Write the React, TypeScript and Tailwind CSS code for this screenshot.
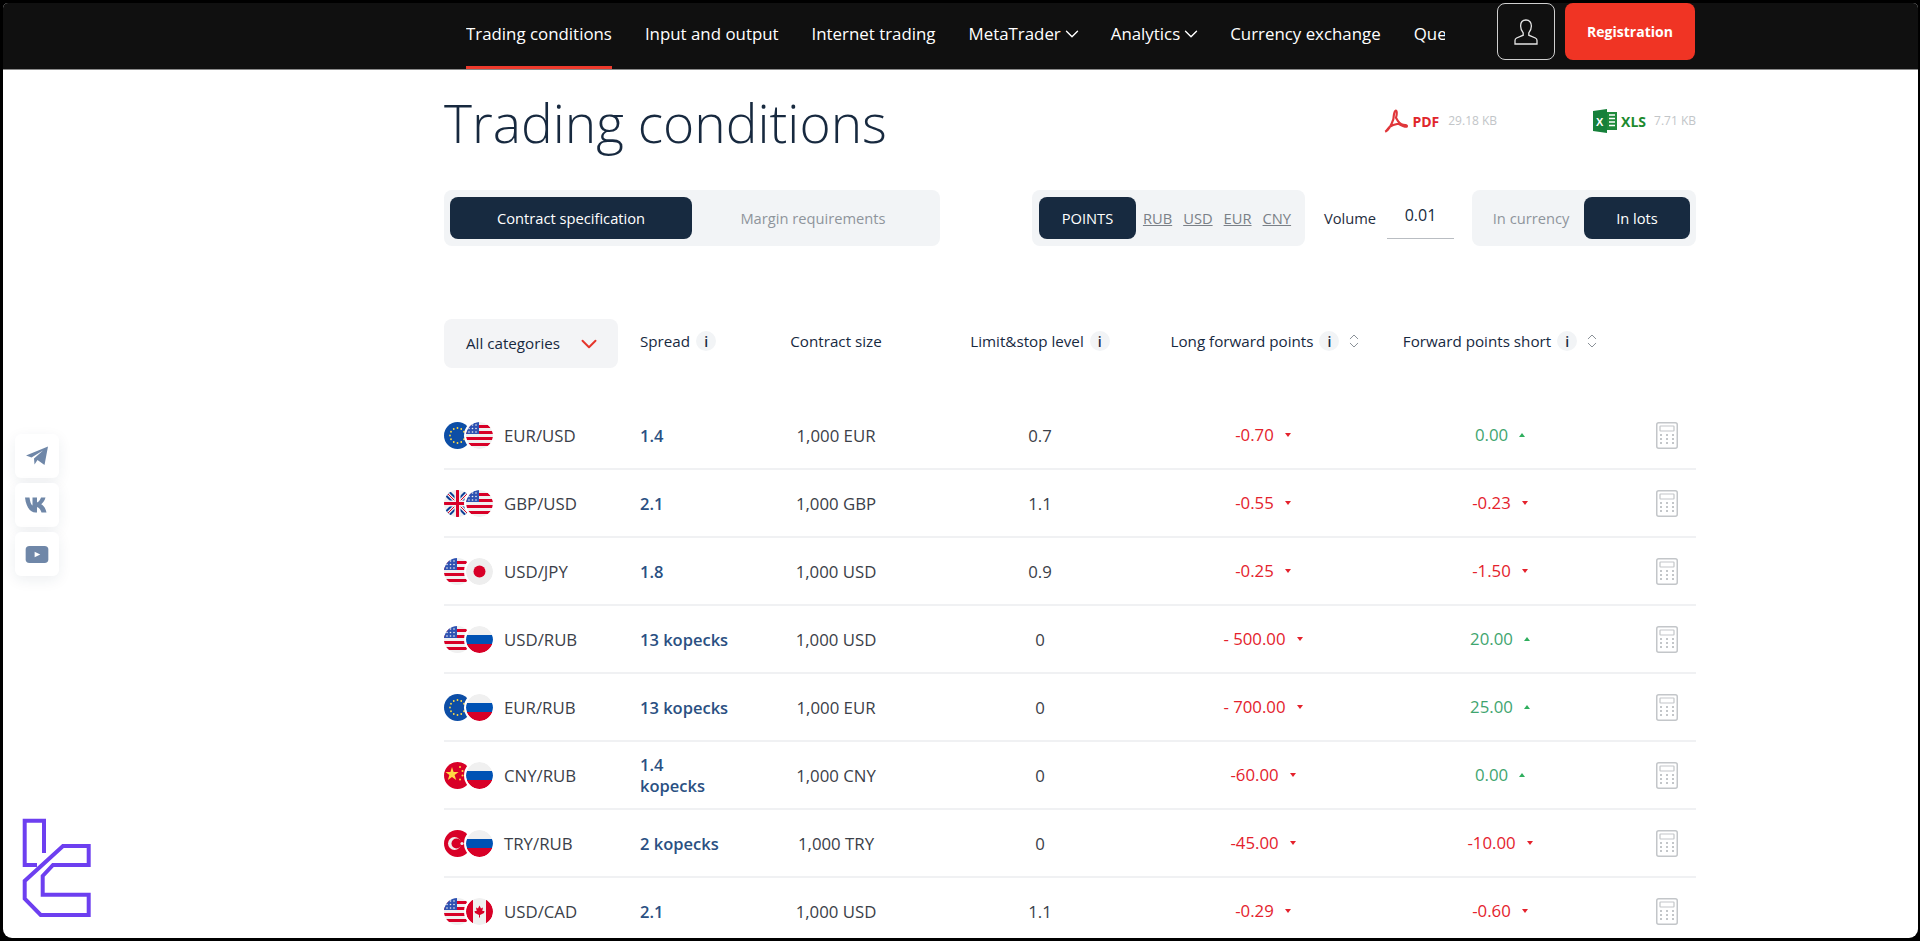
import { ChevronDown, ChevronsUpDown } from "lucide-react";
import { useId } from "react";

type Code = "EUR" | "USD" | "GBP" | "JPY" | "RUB" | "CNY" | "TRY" | "CAD";

const FONT = "font-['Open_Sans','Noto_Sans',sans-serif]";

const NAV = ["Trading conditions", "Input and output", "Internet trading"];

const ROWS: {
  a: Code;
  b: Code;
  spread: string;
  size: string;
  limit: string;
  long: string;
  short: string;
}[] = [
  { a: "EUR", b: "USD", spread: "1.4", size: "1,000 EUR", limit: "0.7", long: "-0.70", short: "0.00" },
  { a: "GBP", b: "USD", spread: "2.1", size: "1,000 GBP", limit: "1.1", long: "-0.55", short: "-0.23" },
  { a: "USD", b: "JPY", spread: "1.8", size: "1,000 USD", limit: "0.9", long: "-0.25", short: "-1.50" },
  { a: "USD", b: "RUB", spread: "13 kopecks", size: "1,000 USD", limit: "0", long: "- 500.00", short: "20.00" },
  { a: "EUR", b: "RUB", spread: "13 kopecks", size: "1,000 EUR", limit: "0", long: "- 700.00", short: "25.00" },
  { a: "CNY", b: "RUB", spread: "1.4 kopecks", size: "1,000 CNY", limit: "0", long: "-60.00", short: "0.00" },
  { a: "TRY", b: "RUB", spread: "2 kopecks", size: "1,000 TRY", limit: "0", long: "-45.00", short: "-10.00" },
  { a: "USD", b: "CAD", spread: "2.1", size: "1,000 USD", limit: "1.1", long: "-0.29", short: "-0.60" },
];

const FlagArt = ({ code }: { code: Code }) => {
  switch (code) {
    case "EUR":
      return (
        <>
          <rect width="27" height="27" fill="#0d4ea6" />
          {[0, 1, 2, 3, 4, 5, 6, 7, 8, 9, 10, 11].map((i) => (
            <circle
              key={i}
              cx={13.5 + 7.5 * Math.cos((i * Math.PI) / 6)}
              cy={13.5 + 7.5 * Math.sin((i * Math.PI) / 6)}
              r="0.9"
              fill="#ffda44"
            />
          ))}
        </>
      );
    case "USD":
      return (
        <>
          <rect width="27" height="27" fill="#f0f0f0" />
          <rect y="3" width="27" height="3" fill="#d80027" />
          <rect y="9" width="27" height="3" fill="#d80027" />
          <rect y="15" width="27" height="3" fill="#d80027" />
          <rect y="21" width="27" height="3" fill="#d80027" />
          <rect width="13" height="12" fill="#2e52b2" />
          {[3, 6.5, 10].map((x) =>
            [3, 6.5, 10].map((y) => <circle key={`${x}${y}`} cx={x} cy={y} r="0.8" fill="#f0f0f0" />)
          )}
        </>
      );
    case "GBP":
      return (
        <>
          <rect width="27" height="27" fill="#f0f0f0" />
          <path d="M0 0 L27 27 M27 0 L0 27" stroke="#0d3f96" strokeWidth="7" />
          <path d="M0 0 L27 27 M27 0 L0 27" stroke="#f0f0f0" strokeWidth="3" />
          <path d="M0 0 L27 27 M27 0 L0 27" stroke="#d80027" strokeWidth="1" />
          <path d="M13.5 0 V27 M0 13.5 H27" stroke="#f0f0f0" strokeWidth="6" />
          <path d="M13.5 0 V27 M0 13.5 H27" stroke="#d80027" strokeWidth="3" />
        </>
      );
    case "JPY":
      return (
        <>
          <rect width="27" height="27" fill="#eeeeee" />
          <circle cx="13.5" cy="13.5" r="6" fill="#d80027" />
        </>
      );
    case "RUB":
      return (
        <>
          <rect width="27" height="9" fill="#f0f0f0" />
          <rect y="9" width="27" height="9" fill="#0052b4" />
          <rect y="18" width="27" height="9" fill="#d80027" />
        </>
      );
    case "CNY":
      return (
        <>
          <rect width="27" height="27" fill="#d80027" />
          <polygon points="8,5 9.6,10 14.6,10 10.6,13 12.2,18 8,15 3.8,18 5.4,13 1.4,10 6.4,10" fill="#ffda44" />
          <circle cx="16" cy="5" r="1" fill="#ffda44" />
          <circle cx="18.5" cy="9" r="1" fill="#ffda44" />
          <circle cx="18.5" cy="13.5" r="1" fill="#ffda44" />
          <circle cx="16" cy="17.5" r="1" fill="#ffda44" />
        </>
      );
    case "TRY":
      return (
        <>
          <rect width="27" height="27" fill="#d80027" />
          <circle cx="10.5" cy="13.5" r="6.5" fill="#f0f0f0" />
          <circle cx="12.5" cy="13.5" r="5" fill="#d80027" />
          <circle cx="18" cy="13.5" r="1.6" fill="#f0f0f0" />
        </>
      );
    case "CAD":
      return (
        <>
          <rect width="27" height="27" fill="#f0f0f0" />
          <rect width="7" height="27" fill="#d80027" />
          <rect x="20" width="7" height="27" fill="#d80027" />
          <polygon
            points="13.5,7.5 15,10.5 17,9.5 16.3,13 18.5,13 18,15 14,17 14,19.5 13,19.5 13,17 9,15 8.5,13 10.7,13 10,9.5 12,10.5"
            fill="#d80027"
          />
        </>
      );
  }
};

const Flag = ({ code, front }: { code: Code; front?: boolean }) => {
  const id = useId();
  return (
    <svg
      viewBox="0 0 27 27"
      className={
        front
          ? "relative -ml-[5px] h-[27px] w-[27px] shrink-0 rounded-full bg-white ring-[2px] ring-white"
          : "h-[27px] w-[27px] shrink-0"
      }
    >
      <clipPath id={id}>
        <circle cx="13.5" cy="13.5" r="13.5" />
      </clipPath>
      <g clipPath={`url(#${id})`}>
        <FlagArt code={code} />
      </g>
    </svg>
  );
};

const InfoDot = () => (
  <span className="flex h-[20px] w-[20px] shrink-0 items-center justify-center rounded-full bg-[#f2f4f6] text-[14px] font-semibold text-[#1a2b40]">
    i
  </span>
);

const Sort = () => <ChevronsUpDown className="h-[18px] w-[18px] shrink-0 text-[#7d848c]" strokeWidth={1.2} />;

const Calculator = () => (
  <svg viewBox="0 0 22 27" className="h-[27px] w-[22px]" fill="none">
    <rect x="0.75" y="0.75" width="20.5" height="25.5" rx="2" stroke="#c3c6c9" strokeWidth="1.5" />
    <rect x="4" y="4" width="14" height="5" rx="0.5" stroke="#c3c6c9" strokeWidth="1.2" />
    {[5, 11, 17].map((x) =>
      [13, 17, 21].map((y) => <rect key={`${x}-${y}`} x={x - 1} y={y - 1} width="2" height="2" fill="#c3c6c9" />)
    )}
  </svg>
);

const Value = ({ text }: { text: string }) => {
  const down = text.startsWith("-");
  return (
    <div className={`flex items-center justify-center gap-[11px] text-[16.8px] ${down ? "text-[#e4222c]" : "text-[#3fa56f]"}`}>
      <span>{text}</span>
      <span
        className={
          down
            ? "h-0 w-0 border-x-[3.5px] border-t-[4px] border-x-transparent border-t-[#e4222c]"
            : "h-0 w-0 border-x-[3.5px] border-b-[4px] border-x-transparent border-b-[#2fae5d]"
        }
      />
    </div>
  );
};

const GRID = "grid grid-cols-[196px_96px_200px_208px_238px_236px_78px] items-center";

const App = () => {
  return (
    <div className={`relative h-[941px] overflow-hidden bg-black pb-[3px] pl-[3px] pr-[2px] pt-[3px] ${FONT}`}>
      <div className="relative h-full overflow-hidden rounded-b-[9px] rounded-t-[5px] bg-white">
        {/* Top bar */}
        <header className="flex h-[67px] border-b border-[#8a8a8a] bg-[#101010] pl-[463px]">
          <nav className="flex h-full w-[979px] gap-[33px] overflow-hidden text-[16.88px] text-white">
            {NAV.map((item, i) => (
              <a
                key={item}
                className={
                  i === 0
                    ? "flex h-full shrink-0 items-center whitespace-nowrap border-b-[3px] border-[#ee3a2c] pb-[1px]"
                    : "flex h-full shrink-0 items-center whitespace-nowrap pb-[4px]"
                }
              >
                {item}
              </a>
            ))}
            <a className="flex shrink-0 items-center whitespace-nowrap pb-[4px]">
              MetaTrader <ChevronDown className="-mr-[5px] h-[22px] w-[22px]" strokeWidth={1.5} />
            </a>
            <a className="flex shrink-0 items-center whitespace-nowrap pb-[4px]">
              Analytics <ChevronDown className="-mr-[5px] h-[22px] w-[22px]" strokeWidth={1.5} />
            </a>
            <a className="flex shrink-0 items-center whitespace-nowrap pb-[4px]">Currency exchange</a>
            <a className="flex shrink-0 items-center whitespace-nowrap pb-[4px]">Questions</a>
          </nav>
          <div className="ml-[52px] flex h-[57px] gap-[10px]">
            <button className="flex w-[58px] items-center justify-center rounded-[8px] border border-[#cfcfcf]">
              <svg viewBox="0 0 28 28" className="h-[28px] w-[28px]" fill="none" stroke="#e4e4e4" strokeWidth="1.3">
                <path d="M14 2c-3.6 0-5.4 2.6-5.4 6 0 3 1.4 5.4 2.6 6.8v2.4L4.6 20c-1.2.6-1.6 1.4-1.6 2.6V26h22v-3.4c0-1.2-.4-2-1.6-2.6l-6.6-2.8v-2.4c1.2-1.4 2.600-3.800 2.600-6.800 0-3.400-1.800-6-5.400-6z" />
              </svg>
            </button>
            <button className="w-[130px] rounded-[8px] bg-[#f03424] text-[14px] font-bold text-white">
              Registration
            </button>
          </div>
        </header>

        <main className="ml-[441px] w-[1252px]">
          {/* Title row */}
          <div className="flex h-[120px] items-start">
            <h1 className="mt-[18px] text-[53.3px] font-light leading-[70px] text-[#17293f]">Trading conditions</h1>
            <div className="ml-auto mt-[38px] flex items-center">
              <svg viewBox="0 0 24 24" className="h-[26px] w-[26px]" fill="none" stroke="#e0363a" strokeWidth="2">
                <path d="M2 22c3-1.500 6-7 7.500-11.500C10 8 10 3 11.500 2.500 13 2 13 6 12 9c2 4 5 6.500 7 6.500 2 0 3.500.5 3 1.500-.5 1-5-.5-8-2.500-3 .5-6 1.500-8 3-1.500 1.500-3 4-4 4.500z" />
              </svg>
              <span className="ml-[3px] text-[14px] font-bold text-[#e0262c]">PDF</span>
              <span className="ml-[9px] text-[12px] text-[#c2c5c8]">29.18 KB</span>
              <svg viewBox="0 0 24 24" className="ml-[96px] h-[24px] w-[24px]">
                <rect x="8" y="3" width="16" height="18" fill="#1f8a3b" />
                <path d="M16 6h6M16 9.500h6M16 13h6M16 16.500h6" stroke="#fff" strokeWidth="1.300" />
                <polygon points="0,2 14,0 14,24 0,22" fill="#16803a" />
                <text x="3" y="16.500" fontSize="11" fontWeight="700" fill="#fff" fontFamily="'Liberation Sans', sans-serif">
                  X
                </text>
              </svg>
              <span className="ml-[4px] text-[14px] font-bold text-[#1c8a2e]">XLS</span>
              <span className="ml-[8px] text-[12px] text-[#c2c5c8]">7.71 KB</span>
            </div>
          </div>

          {/* Controls */}
          <div className="flex h-[56px] items-center text-[14.7px]">
            <div className="flex h-[56px] w-[496px] items-center rounded-[8px] bg-[#f2f4f6] px-[6px]">
              <div className="flex h-[42px] w-[242px] items-center justify-center rounded-[8px] bg-[#172a40] text-white">
                Contract specification
              </div>
              <div className="flex-1 text-center text-[#8f959c]">Margin requirements</div>
            </div>
            <div className="ml-[92px] flex h-[56px] w-[273px] items-center rounded-[8px] bg-[#f2f4f6] px-[7px] text-[#7a8087]">
              <div className="flex h-[42px] w-[97px] items-center justify-center rounded-[8px] bg-[#172a40] text-white">
                POINTS
              </div>
              <div className="ml-[7px] flex gap-[11px] underline">
                <span>RUB</span>
                <span>USD</span>
                <span>EUR</span>
                <span>CNY</span>
              </div>
            </div>
            <span className="ml-[19px] text-[#1f2d3d]">Volume</span>
            <div className="ml-[11px] flex h-[42px] w-[67px] items-center justify-center border-b border-[#b9bdc2] pb-[6px] text-[16px] text-[#172a40]">
              0.01
            </div>
            <div className="ml-[18px] flex h-[56px] w-[224px] items-center rounded-[8px] bg-[#f2f4f6] px-[6px]">
              <div className="flex-1 text-center text-[#8f959c]">In currency</div>
              <div className="flex h-[42px] w-[106px] items-center justify-center rounded-[8px] bg-[#172a40] text-white">
                In lots
              </div>
            </div>
          </div>

          {/* Table head */}
          <div className={`${GRID} mt-[73px] h-[49px] text-[15.2px] font-medium text-[#17293f]`}>
            <div className="flex h-[49px] w-[174px] items-center justify-between rounded-[8px] bg-[#f3f4f6] pl-[22px] pr-[16px]">
              All categories
              <ChevronDown className="h-[26px] w-[26px] text-[#e5352b]" strokeWidth={1.8} />
            </div>
            <div className="flex items-center gap-[6px] whitespace-nowrap pb-[4px]">
              Spread <InfoDot />
            </div>
            <div className="pb-[4px] text-center">Contract size</div>
            <div className="flex items-center justify-center gap-[6px] whitespace-nowrap pb-[4px]">
              Limit&amp;stop level <InfoDot />
            </div>
            <div className="flex items-center justify-center gap-[6px] whitespace-nowrap pb-[4px] pl-[8px]">
              Long forward points <InfoDot /> <Sort />
            </div>
            <div className="flex items-center justify-center gap-[6px] whitespace-nowrap pb-[4px] pl-[4px]">
              Forward points short <InfoDot /> <Sort />
            </div>
            <div />
          </div>

          {/* Rows */}
          <div className="mt-[34px]">
            {ROWS.map((r) => (
              <div
                key={`${r.a}${r.b}`}
                className={`${GRID} h-[68px] border-b-2 border-[#f0f1f3] text-[16.8px] text-[#3b4048]`}
              >
                <div className="flex items-center">
                  <Flag code={r.a} />
                  <Flag code={r.b} front />
                  <span className="ml-[11px] pt-[1px]">
                    {r.a}/{r.b}
                  </span>
                </div>
                <div className="w-[90px] text-[16.5px] font-semibold leading-[21px] text-[#2a5082]">{r.spread}</div>
                <div className="pt-[1px] text-center">{r.size}</div>
                <div className="pt-[1px] text-center">{r.limit}</div>
                <Value text={r.long} />
                <Value text={r.short} />
                <div className="pl-[38px]">
                  <Calculator />
                </div>
              </div>
            ))}
          </div>
        </main>

        {/* Social buttons */}
        <div className="absolute left-[12px] top-[431px] flex flex-col gap-[5px]">
          <div className="flex h-[44px] w-[44px] items-center justify-center rounded-[6px] bg-white shadow-[0_4px_14px_rgba(30,50,80,0.08)]">
            <svg viewBox="0 0 24 24" className="h-[24px] w-[24px]" fill="#6f87a8">
              <path d="M1 11.500 23 2.500 19.500 21 12.500 16 9.500 20.500 9 14.500 18 6.500 6.500 13.500z" />
            </svg>
          </div>
          <div className="flex h-[44px] w-[44px] items-center justify-center rounded-[6px] bg-white shadow-[0_4px_14px_rgba(30,50,80,0.08)]">
            <svg viewBox="0 0 24 16" className="h-[16px] w-[24px]" fill="#6f87a8">
              <path d="M0 .5h4.500c.5 4 1.500 7 3 8V.5h4.500v5c2-.5 3.300-3 4-5h4.500c-.8 3-2.500 5.500-4.300 6.800 2 1 4.300 3.500 5.300 8.200h-5c-.8-2.800-2.500-5-4.500-5.500v5.500h-1.500C5 15.500 1 9.500 0 .5z" />
            </svg>
          </div>
          <div className="flex h-[44px] w-[44px] items-center justify-center rounded-[6px] bg-white shadow-[0_4px_14px_rgba(30,50,80,0.08)]">
            <svg viewBox="0 0 24 18" className="h-[17px] w-[24px]">
              <rect width="24" height="18" rx="4" fill="#6f87a8" />
              <polygon points="9.500,6 15.500,9 9.500,12" fill="#fff" />
            </svg>
          </div>
        </div>

        {/* Watermark logo */}
        <svg viewBox="0 0 70 100" className="absolute left-[19px] top-[815px] h-[100px] w-[70px]" fill="none" stroke="#6d3ff0" strokeWidth="4">
          <path d="M15 47H2.700V2.700H22V35" />
          <path d="M41 28H66.700V47H31L20.700 58V76.700H66.700V97H18.700L2.700 80.700V63Z" />
        </svg>
      </div>
    </div>
  );
};

export default App;
